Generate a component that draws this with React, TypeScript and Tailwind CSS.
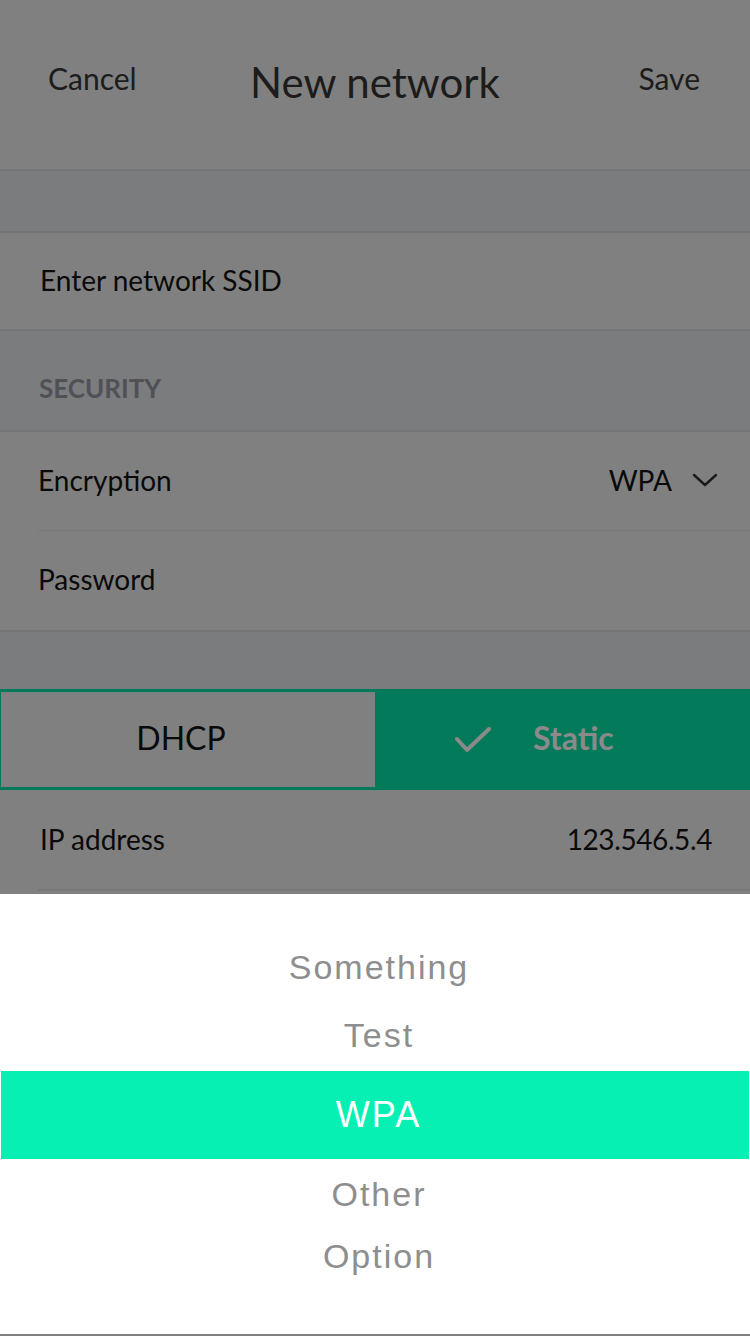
import React from "react";

const options = [
  { label: "Something", h: "h-[68px]" },
  { label: "Test", h: "h-[68px]" },
];
const after = [
  { label: "Other", h: "h-[70px]" },
  { label: "Option", h: "h-[54px]" },
];

function Chevron() {
  return (
    <svg width="26" height="14" viewBox="0 0 26 14" className="ml-[20px]">
      <path d="M2 2 L13 12 L24 2" fill="none" stroke="#1a1a1a" strokeWidth="2.4" strokeLinecap="round" strokeLinejoin="round" />
    </svg>
  );
}

function Check() {
  return (
    <svg width="36" height="26" viewBox="0 0 36 26">
      <path d="M2 12 L12 23 L34 2" fill="none" stroke="#8a8a8a" strokeWidth="4" strokeLinecap="round" strokeLinejoin="round" />
    </svg>
  );
}

export default function App() {
  return (
    <div className="flex h-[1336px] w-[750px] flex-col overflow-hidden bg-white font-[Lato,sans-serif]">
      {/* header — dimmed behind the picker */}
      <header className="flex h-[171px] shrink-0 items-center justify-between border-b-2 border-[#757575] bg-[#808080] px-[48px] pb-[12px]">
        <span className="w-[120px] text-[30px] text-[#1c1c1c]">Cancel</span>
        <h1 className="mt-[6px] text-[42px] leading-none text-[#1c1c1c]">New network</h1>
        <span className="w-[120px] pr-[2px] text-right text-[30px] text-[#1c1c1c]">Save</span>
      </header>

      <div className="h-[62px] shrink-0 border-b-2 border-[#757575] bg-[#7b7c7e]" />

      <div className="flex h-[98px] shrink-0 items-center border-b-2 border-[#757575] bg-[#808080] px-[40px] pb-[3px]">
        <span className="text-[28px] text-[#0a0a0a]">Enter network SSID</span>
      </div>

      <div className="flex h-[101px] shrink-0 items-center border-b-2 border-[#757575] bg-[#7b7c7e] px-[39px] pt-[15px]">
        <span className="text-[26px] font-bold text-[#4f5156]">SECURITY</span>
      </div>

      <div className="flex shrink-0 flex-col bg-[#808080]">
        <div className="ml-[38px] flex h-[99px] items-center border-b border-[#787878] pr-[32px] pb-[3px]">
          <span className="text-[28px] text-[#0a0a0a]">Encryption</span>
          <span className="ml-auto text-[28px] text-[#0a0a0a]">WPA</span>
          <Chevron />
        </div>
        <div className="flex h-[101px] items-center border-b-2 border-[#757575] px-[38px] pb-[3px]">
          <span className="text-[28px] text-[#0a0a0a]">Password</span>
        </div>
      </div>

      <div className="h-[57px] shrink-0 bg-[#7b7c7e]" />

      {/* DHCP / Static segmented control */}
      <div className="grid h-[101px] shrink-0 grid-cols-2">
        <div className="flex items-center justify-center border-y-[3px] border-l border-[#037a5a] bg-[#808080] pr-[14px] pb-[3px]">
          <span className="text-[32px] text-[#0a0a0a]">DHCP</span>
        </div>
        <div className="flex items-center gap-[42px] bg-[#037a5a] pl-[80px]">
          <Check />
          <span className="pb-[3px] text-[32px] font-bold text-[#8a8a8a]">Static</span>
        </div>
      </div>

      <div className="flex h-[104px] shrink-0 flex-col bg-[#808080]">
        <div className="mx-[38px] flex h-[99px] items-center justify-between pl-[2px] pb-[2px]">
          <span className="text-[28px] text-[#0a0a0a]">IP address</span>
          <span className="text-[28px] tracking-[-0.4px] text-[#0a0a0a]">123.546.5.4</span>
        </div>
        <div className="ml-[38px] h-[2px] bg-[#787878]" />
      </div>

      {/* wheel picker */}
      <div className="flex flex-1 flex-col border-b-2 border-[#808080] bg-white pt-[39px] pl-[8px] font-['Liberation_Sans',Arial,sans-serif] tracking-[2px]">
        {options.map((o) => (
          <div key={o.label} className={`flex ${o.h} items-center justify-center text-[34px] text-[#8e8e8e]`}>
            {o.label}
          </div>
        ))}
        <div className="-ml-[7px] mr-px mt-[2px] flex h-[88px] items-center justify-center bg-[#07f0b4] pl-[7px] text-[36px] text-white">
          WPA
        </div>
        {after.map((o) => (
          <div key={o.label} className={`flex ${o.h} items-center justify-center text-[34px] text-[#8e8e8e]`}>
            {o.label}
          </div>
        ))}
      </div>
    </div>
  );
}
